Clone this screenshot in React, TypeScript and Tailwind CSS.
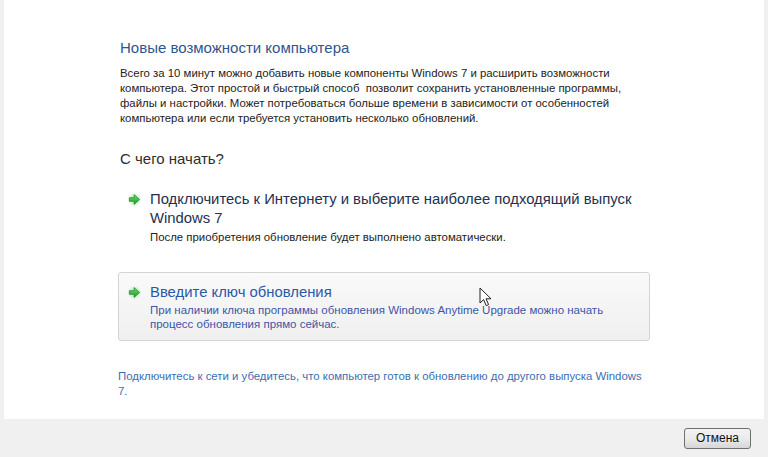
import React from "react"

function GreenArrow() {
  return (
    <svg width="15" height="15" viewBox="0 0 14 14" className="shrink-0">
      <defs>
        <radialGradient id="glow" cx="50%" cy="50%" r="50%">
          <stop offset="0%" stopColor="#8fe08f" stopOpacity="0.9" />
          <stop offset="70%" stopColor="#c4efc4" stopOpacity="0.55" />
          <stop offset="100%" stopColor="#e0f7e0" stopOpacity="0" />
        </radialGradient>
        <linearGradient id="arr" x1="0" y1="0" x2="0" y2="1">
          <stop offset="0%" stopColor="#6ee06a" />
          <stop offset="100%" stopColor="#1c9a28" />
        </linearGradient>
      </defs>
      <circle cx="7" cy="7" r="7" fill="url(#glow)" />
      <path d="M2.2 5.3 H6.6 V2.4 L11.8 7 L6.6 11.6 V8.7 H2.2 Z" fill="url(#arr)" stroke="#197a22" strokeWidth="0.6" strokeLinejoin="round" />
    </svg>
  )
}

function Cursor() {
  return (
    <svg width="13" height="20" viewBox="0 0 13 20" className="absolute left-[479px] top-[287px]">
      <path d="M1 1 V16 L4.6 12.6 L7.2 18.6 L9.6 17.6 L7 11.8 H12 Z" fill="#fff" stroke="#222" strokeWidth="1" strokeLinejoin="round" />
    </svg>
  )
}

export default function App() {
  return (
    <div
      className="relative w-[768px] h-[457px] bg-[#f0f0f0] flex flex-col overflow-hidden"
      style={{ fontFamily: '"Liberation Sans", Arial, sans-serif' }}
    >
      <div className="mx-[4px] h-[419px] bg-white pl-[116px] pt-[38px] whitespace-nowrap">
        <h1 className="text-[15px] leading-[20px] text-[#2f5590]">Новые возможности компьютера</h1>
        <p className="mt-[8px] text-[11.4px] leading-[15px] text-[#222]">
          Всего за 10 минут можно добавить новые компоненты Windows 7 и расширить возможности
          <br />
          компьютера. Этот простой и быстрый способ&nbsp; позволит сохранить установленные программы,
          <br />
          файлы и настройки. Может потребоваться больше времени в зависимости от особенностей
          <br />
          компьютера или если требуется установить несколько обновлений.
        </p>

        <h2 className="mt-[23px] text-[15px] leading-[20px] text-[#2d2d2d]">С чего начать?</h2>

        {/* option 1 */}
        <div className="mt-[10px] -ml-[2px] w-[532px] border border-transparent pl-[8px] pt-[10px] pb-[10px] flex gap-[8px]">
          <div className="pt-[2px]">
            <GreenArrow />
          </div>
          <div>
            <div className="text-[14.85px] leading-[19px] text-[#24304f]">
              Подключитесь к Интернету и выберите наиболее подходящий выпуск
              <br />
              Windows 7
            </div>
            <div className="mt-[2px] text-[11.4px] leading-[14px] text-[#222]">
              После приобретения обновление будет выполнено автоматически.
            </div>
          </div>
        </div>

        {/* option 2, hovered */}
        <div className="mt-[17px] -ml-[2px] w-[532px] rounded-[3px] border border-[#d4d4d4] bg-gradient-to-b from-[#fafafa] to-[#efefef] pl-[8px] pt-[10px] pb-[9px] flex gap-[8px]">
          <div className="pt-[2px]">
            <GreenArrow />
          </div>
          <div>
            <div className="text-[14.85px] leading-[19px] text-[#2a58a8]">Введите ключ обновления</div>
            <div className="mt-[1px] text-[11.5px] leading-[14px] text-[#3d55a8]">
              При наличии ключа программы обновления Windows Anytime Upgrade можно начать
              <br />
              процесс обновления прямо сейчас.
            </div>
          </div>
        </div>

        <p className="mt-[28px] -ml-[2px] text-[11.4px] leading-[15px] text-[#3c6eb0]">
          Подключитесь к сети и убедитесь, что компьютер готов к обновлению до другого выпуска Windows
          <br />
          7.
        </p>
      </div>

      <div className="flex-1 flex items-center justify-end pr-[17px]">
        <button className="w-[67px] h-[21px] rounded-[3px] border border-[#707070] bg-gradient-to-b from-[#f2f2f2] via-[#ebebeb] to-[#d6d6d6] text-[12px] leading-none text-[#111]">
          Отмена
        </button>
      </div>

      <Cursor />
    </div>
  )
}
